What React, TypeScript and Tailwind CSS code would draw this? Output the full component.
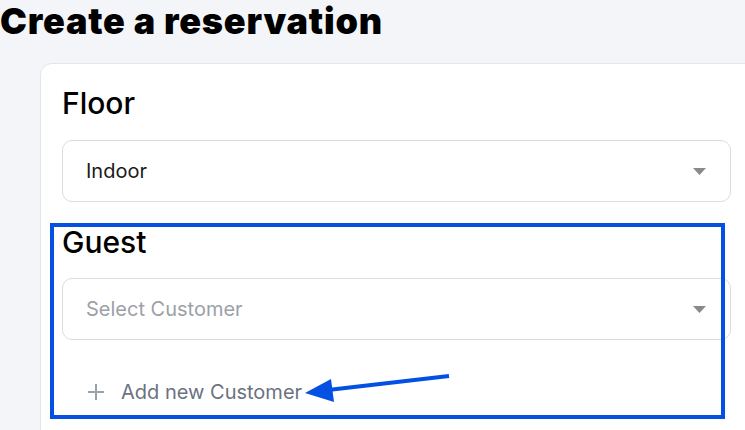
export default function App() {
  return (
    <div className="relative h-[430px] w-[745px] overflow-hidden bg-[#f4f5f8] font-['Inter',sans-serif] text-black">
      <h1 className="text-[36px] font-black leading-[42px] tracking-[0.8px]">Create a reservation</h1>

      <div className="ml-[40px] mt-[21px] w-[740px] rounded-tl-[12px] border border-[#e4e5e9] bg-white pb-[40px] pl-[21px] pr-[30px] pt-[22px]">
        <h2 className="text-[30px] font-medium leading-[34px]">Floor</h2>
        <div className="mt-[20px] flex h-[62px] w-[669px] items-center justify-between rounded-[10px] border border-[#dcdce0] pl-[23px] pr-[24px]">
          <span className="text-[20px] text-[#1a1a1a]">Indoor</span>
          <Caret />
        </div>

        <h2 className="mt-[23px] text-[30px] font-medium leading-[34px]">Guest</h2>
        <div className="mt-[19px] flex h-[62px] w-[669px] items-center justify-between rounded-[10px] border border-[#dcdce0] pl-[23px] pr-[24px]">
          <span className="text-[20px] text-[#9ca0a8]">Select Customer</span>
          <Caret />
        </div>

        <div className="mt-[38px] flex h-[28px] items-center pl-[25px]">
          <svg width="18" height="18" viewBox="0 0 18 18" className="text-[#9aa1aa]">
            <path d="M9 1v16M1 9h16" stroke="currentColor" strokeWidth="2" />
          </svg>
          <span className="ml-[16px] text-[20px] text-[#6b7280]">Add new Customer</span>
        </div>
      </div>

      {/* annotation overlay */}
      <div className="absolute left-[50px] top-[223px] h-[196px] w-[675px] border-[4px] border-[#0350e2]" />
      <svg className="absolute left-0 top-0" width="745" height="430" viewBox="0 0 745 430">
        <path d="M449 376 L328 390" stroke="#0350e2" strokeWidth="4" fill="none" />
        <path d="M305 393 L331 379 L334 402 Z" fill="#0350e2" />
      </svg>
    </div>
  );
}

function Caret() {
  return (
    <svg width="13" height="7" viewBox="0 0 13 7">
      <path d="M0 0h13L6.5 7z" fill="#8a8a8e" />
    </svg>
  );
}
